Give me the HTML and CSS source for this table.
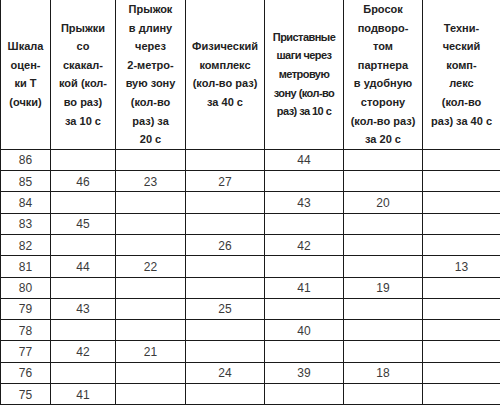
FILE: index.html
```html
<!DOCTYPE html>
<html lang="ru">
<head>
<meta charset="utf-8">
<link rel="stylesheet" href="styles.css">
</head>
<body>
<table class="grid">
  <colgroup>
    <col class="c1"><col class="c2"><col class="c3"><col class="c4"><col class="c5"><col class="c6"><col class="c7">
  </colgroup>
  <thead>
    <tr class="head">
      <th>Шкала<br>оцен-<br>ки Т<br>(очки)</th>
      <th>Прыжки<br>со<br>скакал-<br>кой (кол-<br>во раз)<br>за 10 с</th>
      <th>Прыжок<br>в длину<br>через<br>2-метро-<br>вую зону<br>(кол-во<br>раз) за<br>20 с</th>
      <th>Физический<br>комплекс<br>(кол-во раз)<br>за 40 с</th>
      <th class="narrow">Приставные<br>шаги через<br>метровую<br>зону (кол-во<br>раз) за 10 с</th>
      <th>Бросок<br>подворо-<br>том<br>партнера<br>в удобную<br>сторону<br>(кол-во раз)<br>за 20 с</th>
      <th>Техни-<br>ческий<br>комп-<br>лекс<br>(кол-во<br>раз) за 40 с</th>
    </tr>
  </thead>
  <tbody>
    <tr><td>86</td><td></td><td></td><td></td><td>44</td><td></td><td></td></tr>
    <tr><td>85</td><td>46</td><td>23</td><td>27</td><td></td><td></td><td></td></tr>
    <tr><td>84</td><td></td><td></td><td></td><td>43</td><td>20</td><td></td></tr>
    <tr><td>83</td><td>45</td><td></td><td></td><td></td><td></td><td></td></tr>
    <tr><td>82</td><td></td><td></td><td>26</td><td>42</td><td></td><td></td></tr>
    <tr><td>81</td><td>44</td><td>22</td><td></td><td></td><td></td><td>13</td></tr>
    <tr><td>80</td><td></td><td></td><td></td><td>41</td><td>19</td><td></td></tr>
    <tr><td>79</td><td>43</td><td></td><td>25</td><td></td><td></td><td></td></tr>
    <tr><td>78</td><td></td><td></td><td></td><td>40</td><td></td><td></td></tr>
    <tr><td>77</td><td>42</td><td>21</td><td></td><td></td><td></td><td></td></tr>
    <tr><td>76</td><td></td><td></td><td>24</td><td>39</td><td>18</td><td></td></tr>
    <tr><td>75</td><td>41</td><td></td><td></td><td></td><td></td><td></td></tr>
  </tbody>
</table>
</body>
</html>
```
FILE: styles.css
```css
html, body {
  margin: 0;
  padding: 0;
  background: #fff;
}
.grid {
  border-collapse: collapse;
  table-layout: fixed;
  width: 500px;
  font-family: "Liberation Sans", Arial, sans-serif;
  color: #333;
}
.c1 { width: 50px; }
.c2 { width: 65px; }
.c3 { width: 70px; }
.c4 { width: 79px; }
.c5 { width: 79px; }
.c6 { width: 79px; }
.c7 { width: 78px; }
.grid th, .grid td {
  border: 1px solid #1a1a1a;
  text-align: center;
  vertical-align: middle;
  padding: 0;
}
.grid th {
  border-top: none;
  font-size: 11px;
  font-weight: bold;
  line-height: 18.6px;
  color: #222;
}
.head { height: 149px; }
.grid th.narrow { letter-spacing: -0.55px; }
.grid tbody tr { height: 21.3px; }
.grid td {
  font-size: 12px;
  line-height: 14px;
  padding-top: 1px;
  color: #3a3a3a;
}
```
